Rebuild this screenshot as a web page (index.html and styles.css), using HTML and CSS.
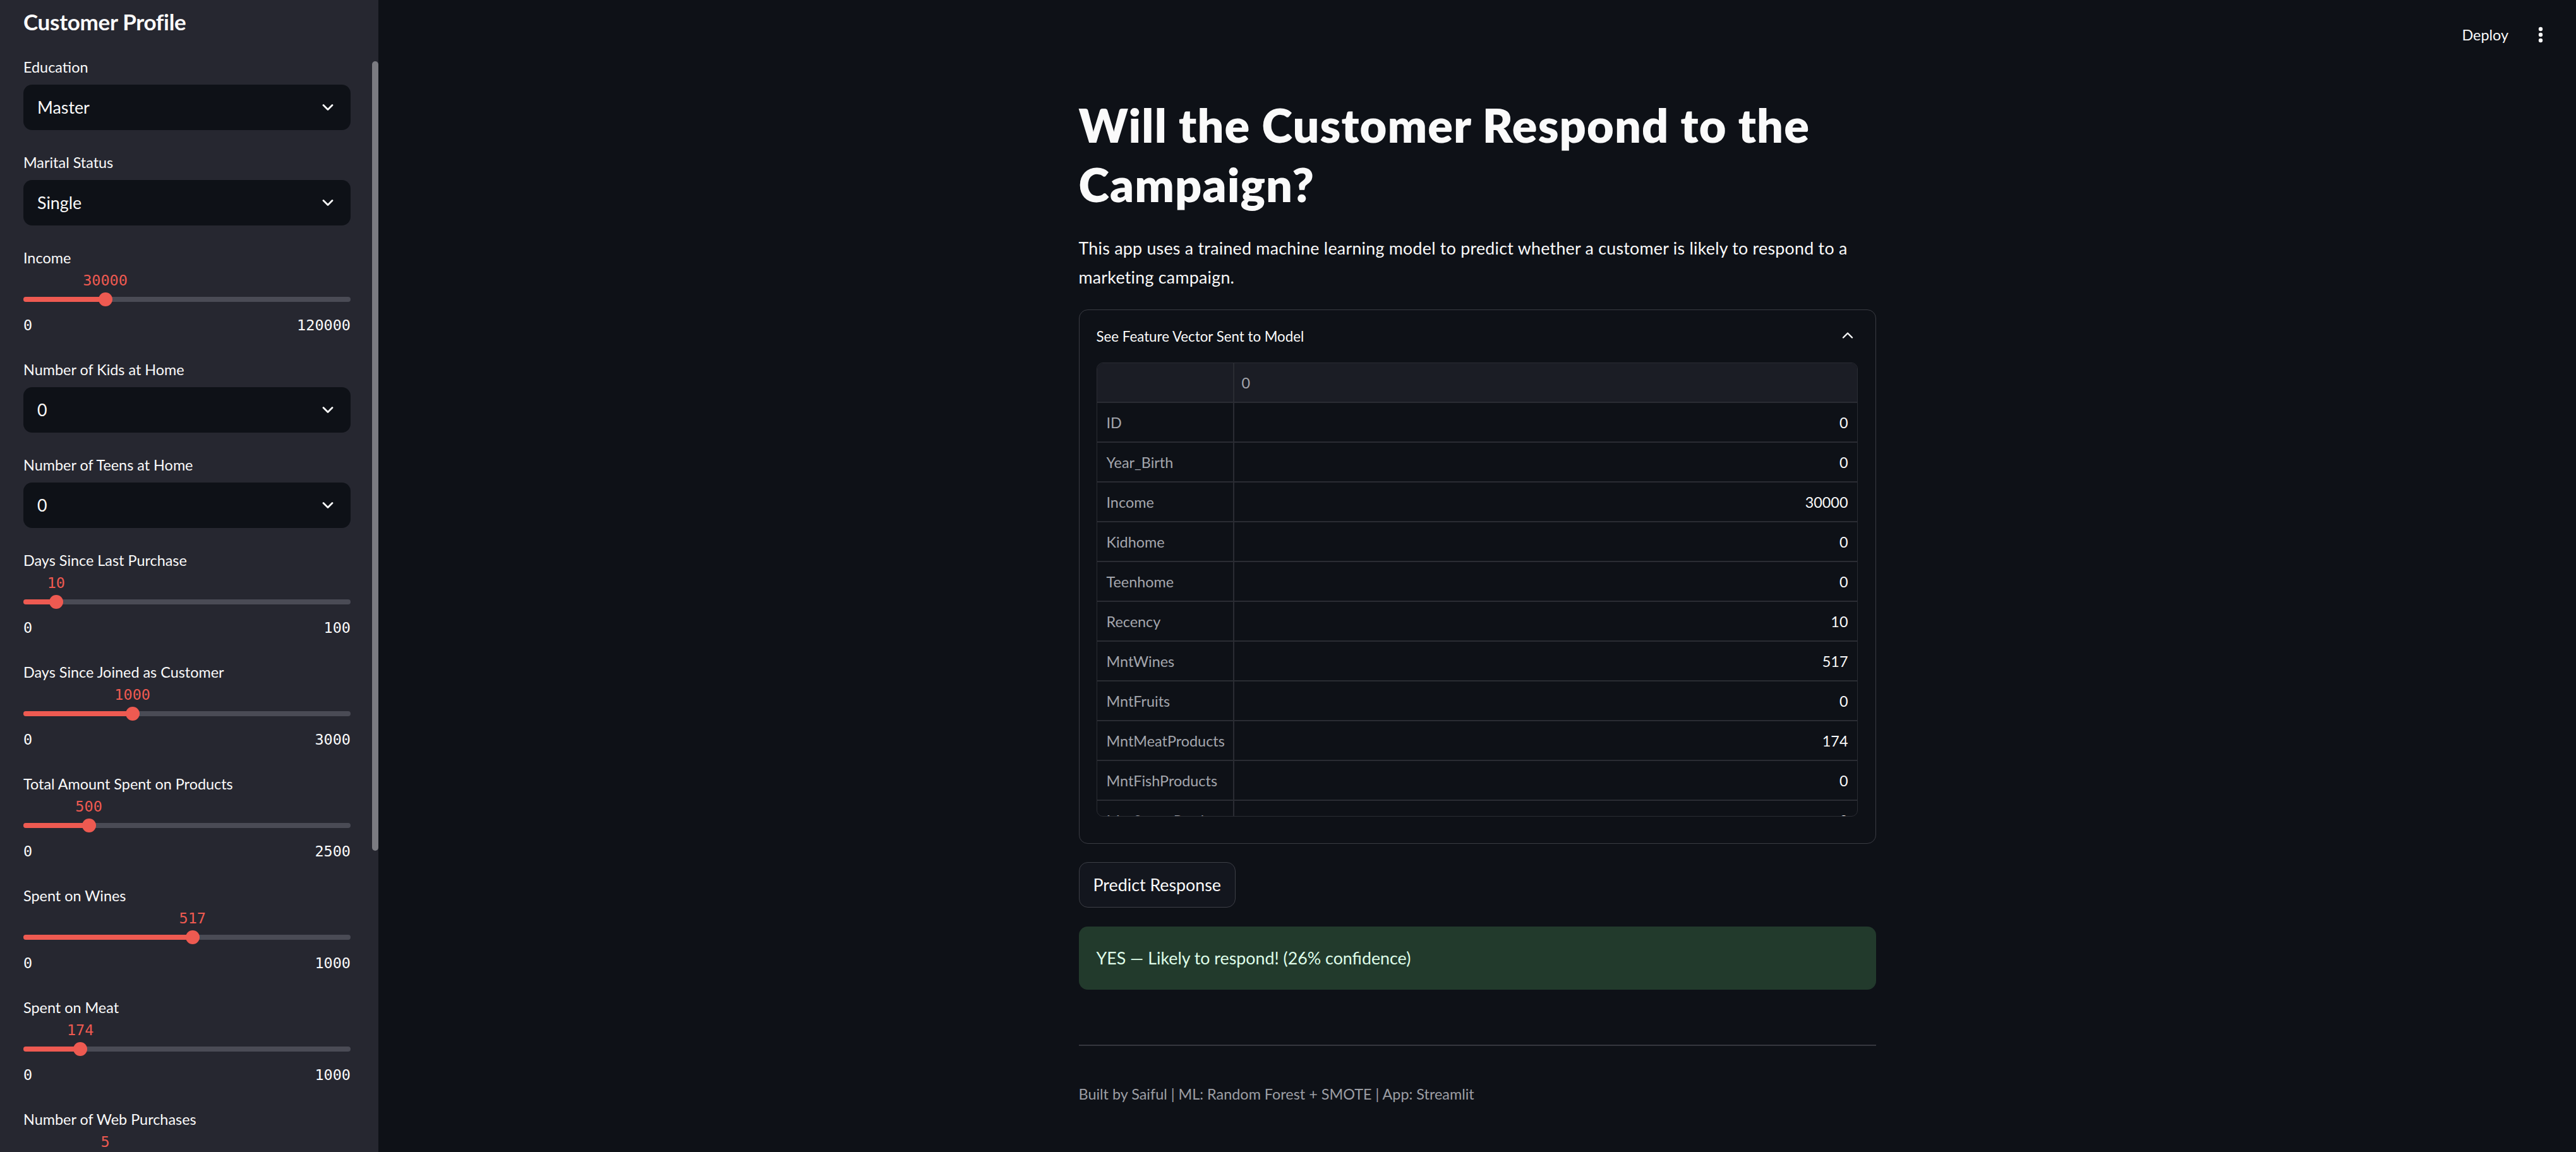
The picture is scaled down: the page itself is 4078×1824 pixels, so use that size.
FILE: index.html
```html
<!DOCTYPE html>
<html lang="en">
<head>
<meta charset="utf-8">
<title>Customer Response Predictor</title>
<link rel="stylesheet" href="styles.css">
</head>
<body>
<div class="app">
  <aside class="sidebar">
    <h2 class="side-title">Customer Profile</h2>
    <div class="widgets">
      <div class="select-widget">
        <div class="label">Education</div>
        <div class="select"><span>Master</span><svg class="chev" viewBox="0 0 18 10"><path d="M2 1.5 L9 8.5 L16 1.5"/></svg></div>
      </div>
      <div class="select-widget">
        <div class="label">Marital Status</div>
        <div class="select"><span>Single</span><svg class="chev" viewBox="0 0 18 10"><path d="M2 1.5 L9 8.5 L16 1.5"/></svg></div>
      </div>
      <div class="slider-widget">
        <div class="label">Income</div>
        <div class="slider-value"><span style="left:25%">30000</span></div>
        <div class="slider-track"><div class="rail"><div class="fill" style="width:25%"></div></div><div class="thumb" style="left:25%"></div></div>
        <div class="slider-range"><span>0</span><span>120000</span></div>
      </div>
      <div class="select-widget">
        <div class="label">Number of Kids at Home</div>
        <div class="select"><span>0</span><svg class="chev" viewBox="0 0 18 10"><path d="M2 1.5 L9 8.5 L16 1.5"/></svg></div>
      </div>
      <div class="select-widget">
        <div class="label">Number of Teens at Home</div>
        <div class="select"><span>0</span><svg class="chev" viewBox="0 0 18 10"><path d="M2 1.5 L9 8.5 L16 1.5"/></svg></div>
      </div>
      <div class="slider-widget">
        <div class="label">Days Since Last Purchase</div>
        <div class="slider-value"><span style="left:10%">10</span></div>
        <div class="slider-track"><div class="rail"><div class="fill" style="width:10%"></div></div><div class="thumb" style="left:10%"></div></div>
        <div class="slider-range"><span>0</span><span>100</span></div>
      </div>
      <div class="slider-widget">
        <div class="label">Days Since Joined as Customer</div>
        <div class="slider-value"><span style="left:33.333%">1000</span></div>
        <div class="slider-track"><div class="rail"><div class="fill" style="width:33.333%"></div></div><div class="thumb" style="left:33.333%"></div></div>
        <div class="slider-range"><span>0</span><span>3000</span></div>
      </div>
      <div class="slider-widget">
        <div class="label">Total Amount Spent on Products</div>
        <div class="slider-value"><span style="left:20%">500</span></div>
        <div class="slider-track"><div class="rail"><div class="fill" style="width:20%"></div></div><div class="thumb" style="left:20%"></div></div>
        <div class="slider-range"><span>0</span><span>2500</span></div>
      </div>
      <div class="slider-widget">
        <div class="label">Spent on Wines</div>
        <div class="slider-value"><span style="left:51.7%">517</span></div>
        <div class="slider-track"><div class="rail"><div class="fill" style="width:51.7%"></div></div><div class="thumb" style="left:51.7%"></div></div>
        <div class="slider-range"><span>0</span><span>1000</span></div>
      </div>
      <div class="slider-widget">
        <div class="label">Spent on Meat</div>
        <div class="slider-value"><span style="left:17.4%">174</span></div>
        <div class="slider-track"><div class="rail"><div class="fill" style="width:17.4%"></div></div><div class="thumb" style="left:17.4%"></div></div>
        <div class="slider-range"><span>0</span><span>1000</span></div>
      </div>
      <div class="slider-widget">
        <div class="label">Number of Web Purchases</div>
        <div class="slider-value"><span style="left:25%">5</span></div>
      </div>
    </div>
    <div class="scroll-thumb"></div>
  </aside>

  <main class="main">
    <header class="topbar">
      <span class="deploy">Deploy</span>
      <svg class="kebab" viewBox="0 0 40 40"><circle cx="20" cy="11" r="3.2"/><circle cx="20" cy="20" r="3.2"/><circle cx="20" cy="29" r="3.2"/></svg>
    </header>
    <div class="content">
      <h1 class="title">Will the Customer Respond to the Campaign?</h1>
      <p class="intro">This app uses a trained machine learning model to predict whether a customer is likely to respond to a marketing campaign.</p>

      <section class="expander">
        <div class="exp-head">
          <span>See Feature Vector Sent to Model</span>
          <svg class="chev-up" viewBox="0 0 18 10"><path d="M2 8.5 L9 1.5 L16 8.5"/></svg>
        </div>
        <div class="exp-body">
          <div class="grid">
            <div class="row head"><div class="idx"></div><div class="val">0</div></div>
            <div class="row"><div class="idx">ID</div><div class="val">0</div></div>
            <div class="row"><div class="idx">Year_Birth</div><div class="val">0</div></div>
            <div class="row"><div class="idx">Income</div><div class="val">30000</div></div>
            <div class="row"><div class="idx">Kidhome</div><div class="val">0</div></div>
            <div class="row"><div class="idx">Teenhome</div><div class="val">0</div></div>
            <div class="row"><div class="idx">Recency</div><div class="val">10</div></div>
            <div class="row"><div class="idx">MntWines</div><div class="val">517</div></div>
            <div class="row"><div class="idx">MntFruits</div><div class="val">0</div></div>
            <div class="row"><div class="idx">MntMeatProducts</div><div class="val">174</div></div>
            <div class="row"><div class="idx">MntFishProducts</div><div class="val">0</div></div>
            <div class="row"><div class="idx">MntSweetProducts</div><div class="val">0</div></div>
          </div>
        </div>
      </section>

      <button class="btn">Predict Response</button>

      <div class="alert-success">YES — Likely to respond! (26% confidence)</div>

      <hr class="divider">

      <p class="caption">Built by Saiful | ML: Random Forest + SMOTE | App: Streamlit</p>
    </div>
  </main>
</div>
</body>
</html>
```

FILE: styles.css
```css
* { box-sizing: border-box; }

html, body {
  margin: 0;
  padding: 0;
  background: #0e1117;
  color: #fafafa;
  font-family: Lato, "Noto Sans", sans-serif;
}

.app {
  display: flex;
  width: 4078px;
  height: 1824px;
  overflow: hidden;
}

/* ---------- Sidebar ---------- */
.sidebar {
  position: relative;
  flex: 0 0 599px;
  height: 1824px;
  background: #262730;
  padding: 9px 44px 0 37px;
  overflow: hidden;
}

.side-title {
  margin: 0;
  font-size: 35px;
  line-height: 50px;
  font-weight: 700;
  letter-spacing: -0.3px;
  color: #fafafa;
}

.widgets {
  margin-top: 27px;
  display: flex;
  flex-direction: column;
  gap: 31px;
}

.label {
  height: 40px;
  line-height: 40px;
  font-size: 23.4px;
  color: #fafafa;
  white-space: nowrap;
}

.select-widget .label { margin-bottom: 8px; }

.select {
  height: 72px;
  background: #0e1117;
  border-radius: 14px;
  display: flex;
  align-items: center;
  justify-content: space-between;
  padding: 0 27px 0 22px;
  font-size: 26.8px;
  color: #fafafa;
}

.chev {
  width: 18px;
  height: 10px;
  fill: none;
  stroke: #fafafa;
  stroke-width: 2.8;
  stroke-linecap: round;
  stroke-linejoin: round;
}

.slider-widget { display: flex; flex-direction: column; }

.slider-value {
  position: relative;
  height: 32px;
  font-family: "DejaVu Sans Mono", "Liberation Mono", monospace;
  font-size: 23.5px;
  line-height: 32px;
  color: #ee5a51;
}
.slider-value span {
  position: absolute;
  top: 0;
  transform: translateX(-50%);
  white-space: nowrap;
}

.slider-track {
  position: relative;
  height: 28px;
  display: flex;
  align-items: center;
}
.rail {
  width: 100%;
  height: 8px;
  border-radius: 4px;
  background: #4a4b55;
  overflow: hidden;
}
.fill {
  height: 100%;
  background: #ee5a51;
}
.thumb {
  position: absolute;
  top: 3px;
  width: 22px;
  height: 22px;
  margin-left: -11px;
  border-radius: 50%;
  background: #ee5a51;
}

.slider-range {
  margin-top: 8px;
  height: 38px;
  line-height: 38px;
  display: flex;
  justify-content: space-between;
  font-family: "DejaVu Sans Mono", "Liberation Mono", monospace;
  font-size: 23.5px;
  color: #fafafa;
}

.scroll-thumb {
  position: absolute;
  top: 97px;
  right: 0;
  width: 10px;
  height: 1250px;
  border-radius: 5px;
  background: #7b7b81;
}

/* ---------- Main ---------- */
.main {
  flex: 1 1 auto;
  display: flex;
  flex-direction: column;
  background: #0e1117;
}

.topbar {
  height: 110px;
  display: flex;
  align-items: center;
  justify-content: flex-end;
  padding-right: 36px;
  gap: 31px;
}
.deploy {
  font-size: 23.4px;
  color: #fafafa;
}
.kebab {
  width: 40px;
  height: 40px;
  fill: #fafafa;
}

.content {
  width: 1262px;
  margin: 0 auto;
  padding-top: 41px;
  display: flex;
  flex-direction: column;
}

.title {
  margin: 0;
  font-size: 73.7px;
  line-height: 94px;
  font-weight: 800;
  letter-spacing: 1.1px;
  color: #fafafa;
}

.intro {
  margin: 31px 0 0;
  font-size: 26.8px;
  line-height: 46px;
  letter-spacing: 0.25px;
  color: #fafafa;
}

.expander {
  margin-top: 28px;
  border: 1px solid #3a3c43;
  border-radius: 14px;
}
.exp-head {
  height: 83px;
  display: flex;
  align-items: center;
  justify-content: space-between;
  padding: 0 35px 0 27px;
  font-size: 22.3px;
  color: #fafafa;
}
.chev-up {
  width: 18px;
  height: 10px;
  margin-top: -4px;
  fill: none;
  stroke: #fafafa;
  stroke-width: 2.4;
  stroke-linecap: round;
  stroke-linejoin: round;
}
.exp-body {
  padding: 0 28px 42px 27px;
}

.grid {
  height: 719px;
  overflow: hidden;
  border: 1px solid #2a2c33;
  border-radius: 10px;
  font-size: 23.4px;
}
.row {
  display: grid;
  grid-template-columns: 217px 1fr;
  height: 63px;
  border-bottom: 2px solid #2a2c33;
}
.row.head {
  height: 63px;
  background: #1b1d25;
}
.idx {
  display: flex;
  align-items: center;
  padding-left: 15px;
  color: #a4a6ad;
  border-right: 2px solid #2a2c33;
}
.val {
  display: flex;
  align-items: center;
  justify-content: flex-end;
  padding-right: 14px;
  color: #fafafa;
}
.row.head .val {
  justify-content: flex-start;
  padding-left: 12px;
  color: #a4a6ad;
}

.btn {
  align-self: flex-start;
  margin-top: 29px;
  height: 72px;
  padding: 0 22px;
  background: #13161e;
  border: 1px solid #3d3f46;
  border-radius: 14px;
  color: #fafafa;
  font-family: Lato, "Noto Sans", sans-serif;
  font-size: 26.8px;
}

.alert-success {
  margin-top: 30px;
  height: 100px;
  display: flex;
  align-items: center;
  padding: 0 28px;
  background: #223a2c;
  border-radius: 14px;
  color: #dffde9;
  font-size: 26.8px;
}

.divider {
  margin: 87px 0 0;
  border: 0;
  height: 2px;
  background: #35373e;
}

.caption {
  margin: 56px 0 0;
  font-size: 23.4px;
  line-height: 40px;
  color: #9c9ea4;
}
```
